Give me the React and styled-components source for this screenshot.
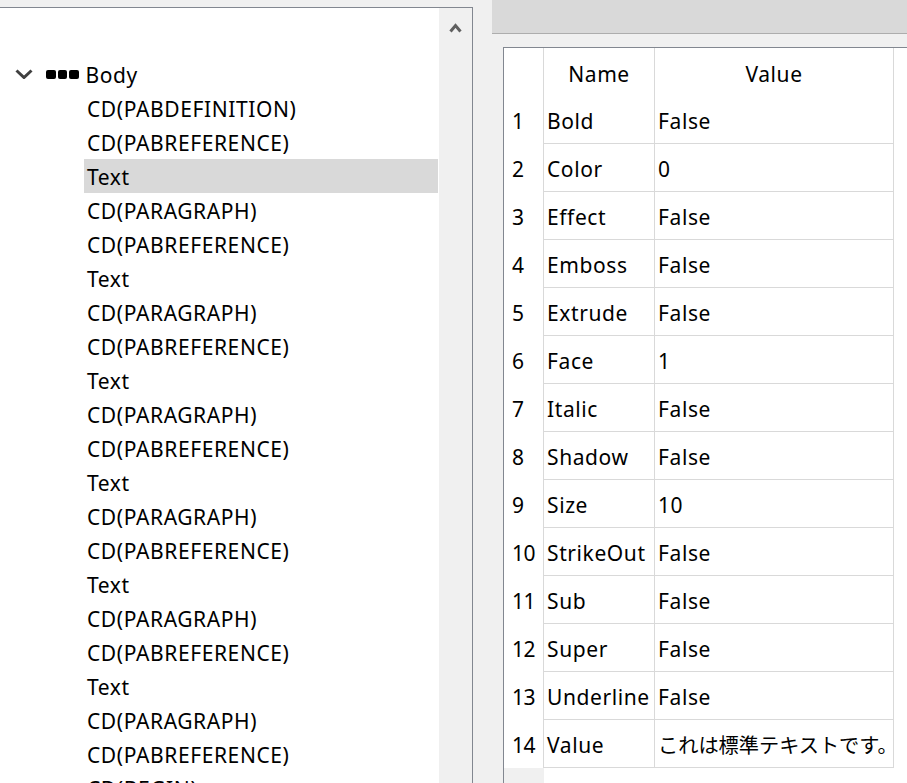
import React from "react";
import styled, { createGlobalStyle } from "styled-components";

const Global = createGlobalStyle`
  html, body { margin: 0; padding: 0; background: #f0f0f0; }
  body { font-family: "Noto Sans", "Noto Sans CJK JP", sans-serif; color: #000; }
  * { box-sizing: border-box; }
`;

const Screen = styled.div`
  width: 907px;
  height: 783px;
  overflow: hidden;
  display: flex;
  align-items: flex-start;
  background: #f0f0f0;
  font-size: 21px;
  letter-spacing: 0.6px;
`;

const TreePane = styled.div`
  margin-top: 7px;
  width: 473px;
  height: 776px;
  flex: none;
  display: flex;
  border-top: 1px solid #828790;
  border-right: 1px solid #828790;
`;

const TreeArea = styled.div`
  flex: 1;
  background: #fff;
  padding-top: 49px;
  overflow: hidden;
`;

const Scrollbar = styled.div`
  width: 33px;
  flex: none;
  background: #f0f0f0;
  display: flex;
  justify-content: center;
  padding-top: 15px;
`;

const TreeRow = styled.div`
  height: 34px;
  line-height: 34px;
  display: flex;
  align-items: center;
  white-space: nowrap;
  margin-left: ${(p) => (p.$root ? 0 : 84)}px;
  margin-right: ${(p) => (p.$root ? 0 : 1)}px;
  padding-left: ${(p) => (p.$root ? 15 : 3)}px;
  padding-top: 1px;
  background: ${(p) => (p.$selected ? "#d9d9d9" : "transparent")};
`;

const Expander = styled.svg`
  width: 18px;
  height: 10px;
  margin-right: 13px;
  margin-top: -1px;
  flex: none;
`;

const Dots = styled.div`
  display: flex;
  gap: 2px;
  margin-right: 7px;
  margin-top: -1px;
`;

const Dot = styled.span`
  width: 9.5px;
  height: 9px;
  border-radius: 2px;
  background: #000;
`;

const RightSide = styled.div`
  margin-left: 19px;
  flex: 1;
  display: flex;
  flex-direction: column;
  height: 783px;
`;

const TopBar = styled.div`
  height: 34px;
  background: #d9d9d9;
  border-bottom: 1px solid #adadad;
  flex: none;
`;

const Grid = styled.div`
  margin-top: 13px;
  margin-left: 11px;
  flex: 1;
  background: #fff;
  border-top: 1px solid #828790;
  border-left: 1px solid #828790;
  display: flex;
  flex-direction: column;
`;

const GridRow = styled.div`
  display: flex;
  height: 48px;
  flex: none;
`;

const RowHead = styled.div`
  width: 40px;
  flex: none;
  border-right: 1px solid #d9d9d9;
  padding-left: 8px;
  display: flex;
  align-items: center;
  white-space: nowrap;
  letter-spacing: -0.6px;
  padding-top: 2px;
`;

const Cell = styled.div`
  width: ${(p) => p.$w}px;
  flex: none;
  border-right: 1px solid #d9d9d9;
  border-bottom: ${(p) => (p.$head ? "none" : "1px solid #d9d9d9")};
  display: flex;
  align-items: center;
  justify-content: ${(p) => (p.$head ? "center" : "flex-start")};
  padding-left: ${(p) => (p.$head ? 0 : 3)}px;
  padding-top: ${(p) => (p.$head ? 4 : 2)}px;
  white-space: nowrap;
  overflow: visible;
`;

const Filler = styled.div`
  flex: 1;
  display: flex;
`;

const FillerHead = styled.div`
  width: 40px;
  background: #f0f0f0;
`;

const JapaneseText = styled.span`
  font-family: "Noto Sans CJK JP", sans-serif;
  font-size: 20.2px;
  letter-spacing: 0;
`;

const treeItems = [
  "CD(PABDEFINITION)",
  "CD(PABREFERENCE)",
  "Text",
  "CD(PARAGRAPH)",
  "CD(PABREFERENCE)",
  "Text",
  "CD(PARAGRAPH)",
  "CD(PABREFERENCE)",
  "Text",
  "CD(PARAGRAPH)",
  "CD(PABREFERENCE)",
  "Text",
  "CD(PARAGRAPH)",
  "CD(PABREFERENCE)",
  "Text",
  "CD(PARAGRAPH)",
  "CD(PABREFERENCE)",
  "Text",
  "CD(PARAGRAPH)",
  "CD(PABREFERENCE)",
  "CD(BEGIN)",
];

const props = [
  ["Bold", "False"],
  ["Color", "0"],
  ["Effect", "False"],
  ["Emboss", "False"],
  ["Extrude", "False"],
  ["Face", "1"],
  ["Italic", "False"],
  ["Shadow", "False"],
  ["Size", "10"],
  ["StrikeOut", "False"],
  ["Sub", "False"],
  ["Super", "False"],
  ["Underline", "False"],
  ["Value", null],
];

export default function App() {
  return (
    <>
      <Global />
      <Screen>
        <TreePane>
          <TreeArea>
            <TreeRow $root>
              <Expander viewBox="0 0 18 10">
                <polyline points="1.5,1.5 9,8.5 16.5,1.5" fill="none" stroke="#404040" strokeWidth="3" />
              </Expander>
              <Dots>
                <Dot />
                <Dot />
                <Dot />
              </Dots>
              Body
            </TreeRow>
            {treeItems.map((t, i) => (
              <TreeRow key={i} $selected={i === 2}>
                {t}
              </TreeRow>
            ))}
          </TreeArea>
          <Scrollbar>
            <svg width="13" height="10" viewBox="0 0 13 10">
              <polyline points="1.5,8.5 6.5,2.5 11.5,8.5" fill="none" stroke="#606060" strokeWidth="3" />
            </svg>
          </Scrollbar>
        </TreePane>
        <RightSide>
          <TopBar />
          <Grid>
            <GridRow>
              <RowHead />
              <Cell $w={111} $head>Name</Cell>
              <Cell $w={239} $head>Value</Cell>
            </GridRow>
            {props.map(([n, v], i) => (
              <GridRow key={n}>
                <RowHead>{i + 1}</RowHead>
                <Cell $w={111}>{n}</Cell>
                <Cell $w={239}>
                  {v === null ? <JapaneseText>これは標準テキストです。</JapaneseText> : v}
                </Cell>
              </GridRow>
            ))}
            <Filler>
              <FillerHead />
            </Filler>
          </Grid>
        </RightSide>
      </Screen>
    </>
  );
}
